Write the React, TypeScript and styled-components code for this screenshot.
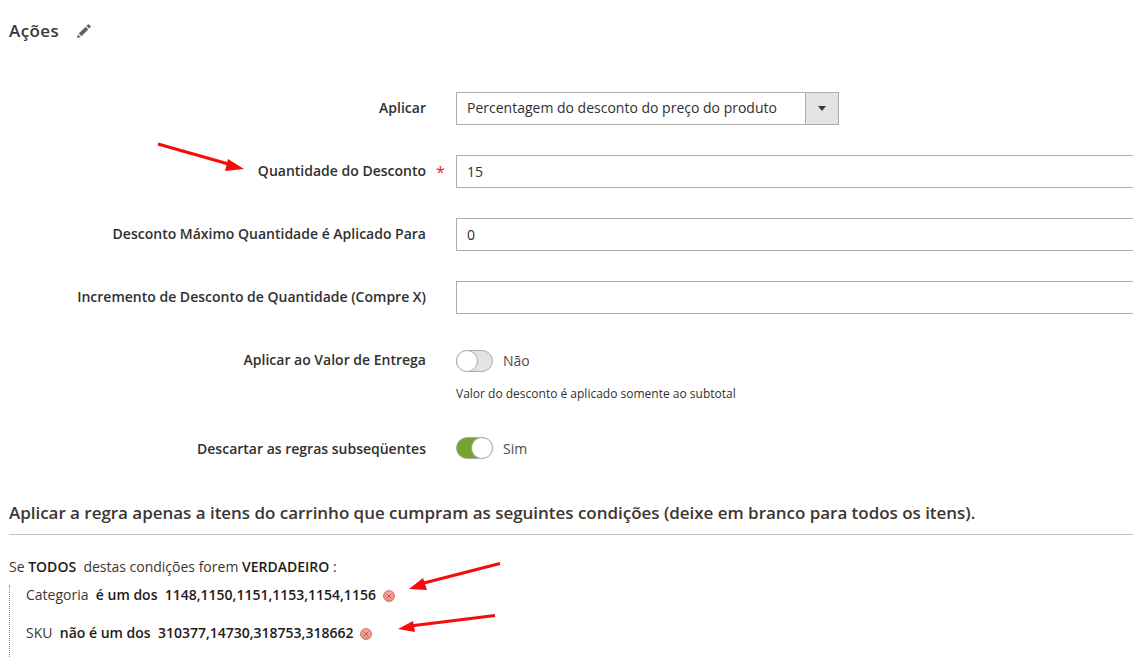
import React from 'react';
import styled, { createGlobalStyle } from 'styled-components';

const GlobalStyle = createGlobalStyle`
  html, body {
    margin: 0;
    padding: 0;
    background: #fff;
    overflow: hidden;
  }
  body {
    font-family: "Open Sans", "Liberation Sans", sans-serif;
    font-size: 14px;
    color: #303030;
  }
`;

const Page = styled.div`
  position: relative;
  width: 1133px;
  height: 658px;
  overflow: hidden;
  padding: 19px 0 0 9px;
  box-sizing: border-box;
`;

const SectionHead = styled.div`
  display: flex;
  align-items: center;
  gap: 18px;
  height: 22px;
  margin-bottom: 51px;
`;

const SectionTitle = styled.span`
  font-size: 17px;
  font-weight: 600;
  color: #41362f;
  letter-spacing: 0.4px;
`;

const PencilIcon = styled.svg`
  margin-top: 1px;
`;

const Form = styled.div`
  margin-left: -9px;
`;

const Row = styled.div<{ $gap: number; $top?: boolean }>`
  display: grid;
  grid-template-columns: 426px 30px 700px;
  align-items: ${(p) => (p.$top ? 'start' : 'center')};
  margin-bottom: ${(p) => p.$gap}px;
`;

const Label = styled.label<{ $flush?: boolean }>`
  font-weight: 600;
  font-size: 14px;
  text-align: right;
  color: #303030;
  padding-bottom: ${(p) => (p.$flush ? 0 : 2)}px;
`;

const Required = styled.span`
  color: #e22626;
  font-size: 16px;
  padding-left: 10px;
  line-height: 1;
`;

const TextInput = styled.div`
  box-sizing: border-box;
  height: 33px;
  border: 1px solid #adadad;
  padding: 0 10px;
  line-height: 31px;
  color: #303030;
  background: #fff;
`;

const SelectBox = styled.div`
  box-sizing: border-box;
  width: 383px;
  height: 33px;
  border: 1px solid #adadad;
  display: flex;
`;

const SelectValue = styled.span`
  flex: 1;
  padding: 0 10px;
  line-height: 29px;
  color: #303030;
`;

const SelectArrow = styled.span`
  width: 32px;
  background: #e3e3e3;
  border-left: 1px solid #adadad;
  display: flex;
  align-items: center;
  justify-content: center;

  &::after {
    content: '';
    border-style: solid;
    border-width: 5px 4px 0;
    border-color: #41362f transparent transparent;
  }
`;

const ToggleLine = styled.div`
  display: flex;
  align-items: center;
  gap: 10px;
  height: 22px;
`;

const Toggle = styled.span<{ $on?: boolean }>`
  box-sizing: border-box;
  position: relative;
  display: block;
  width: 37px;
  height: 22px;
  border-radius: 12px;
  border: 1px solid #adadad;
  background: ${(p) => (p.$on ? '#79a22e' : '#e3e3e3')};

  &::after {
    content: '';
    position: absolute;
    top: -1px;
    ${(p) => (p.$on ? 'right: -1px;' : 'left: -1px;')}
    box-sizing: border-box;
    width: 22px;
    height: 22px;
    border-radius: 50%;
    background: #fff;
    border: 1px solid #adadad;
  }
`;

const ToggleText = styled.span<{ $lift?: boolean }>`
  color: #514943;
  padding-bottom: ${(p) => (p.$lift ? 2 : 0)}px;
`;

const Note = styled.div`
  font-size: 12px;
  color: #303030;
  margin-top: 13px;
  line-height: 17px;
`;

const FieldStack = styled.div``;

const ConditionsTitle = styled.h3`
  margin: 43px 0 0;
  font-size: 17px;
  line-height: 22px;
  font-weight: 600;
  color: #41362f;
  letter-spacing: -0.03px;
  padding-bottom: 10px;
  border-bottom: 1px solid #cac3b4;
`;

const Conditions = styled.div`
  margin-top: 22px;
  line-height: 20px;
  color: #41362f;
`;

const ConditionsLead = styled.div`
  white-space: pre;
`;

const Strong = styled.strong`
  font-weight: 600;
  color: #1f1b18;
`;

const CondList = styled.ul`
  list-style: none;
  margin: 0;
  padding: 0 0 0 16px;
  border-left: 1px dotted #888;
  height: 90px;
`;

const CondItem = styled.li<{ $gap: number }>`
  display: flex;
  align-items: center;
  height: 20px;
  margin-top: ${(p) => p.$gap}px;
  white-space: pre;
`;

const RemoveIcon = styled.svg`
  margin-left: 7px;
  margin-top: 2px;
`;

const ArrowLayer = styled.svg`
  position: absolute;
  inset: 0;
  pointer-events: none;
`;

const Pencil = () => (
  <PencilIcon width="14" height="14" viewBox="0 0 14 14">
    <path d="M0 14l.9-3.6 2.7 2.7zM1.7 9.6L8.6 2.7l2.7 2.7-6.9 6.9zM9.4 1.9L10.9.4a.7.7 0 0 1 1 0l1.7 1.7a.7.7 0 0 1 0 1l-1.5 1.5z" fill="#676056" />
  </PencilIcon>
);

const Remove = () => (
  <RemoveIcon width="12" height="12" viewBox="0 0 12 12">
    <defs>
      <radialGradient id="removeFill" cx="50%" cy="40%" r="65%">
        <stop offset="0%" stopColor="#f4b6ae" />
        <stop offset="100%" stopColor="#e5837a" />
      </radialGradient>
    </defs>
    <circle cx="6" cy="6" r="5.5" fill="url(#removeFill)" stroke="#d0675e" strokeWidth="0.8" />
    <path d="M3.8 3.8l4.4 4.4M8.2 3.8L3.8 8.2" stroke="#c44c42" strokeWidth="1" />
  </RemoveIcon>
);

const Arrow = ({ line, head }: { line: string; head: string }) => (
  <>
    <path d={line} stroke="#f60a0a" strokeWidth="3" fill="none" />
    <polygon points={head} fill="#f60a0a" />
  </>
);

const App: React.FC = () => {
  return (
    <Page>
      <GlobalStyle />
      <SectionHead>
        <SectionTitle>Ações</SectionTitle>
        <Pencil />
      </SectionHead>

      <Form>
        <Row $gap={30}>
          <Label>Aplicar</Label>
          <span />
          <SelectBox>
            <SelectValue>Percentagem do desconto do preço do produto</SelectValue>
            <SelectArrow />
          </SelectBox>
        </Row>
        <Row $gap={30}>
          <Label>Quantidade do Desconto</Label>
          <Required>*</Required>
          <TextInput>15</TextInput>
        </Row>
        <Row $gap={30}>
          <Label>Desconto Máximo Quantidade é Aplicado Para</Label>
          <span />
          <TextInput>0</TextInput>
        </Row>
        <Row $gap={36}>
          <Label>Incremento de Desconto de Quantidade (Compre X)</Label>
          <span />
          <TextInput />
        </Row>
        <Row $gap={35} $top>
          <Label $flush>Aplicar ao Valor de Entrega</Label>
          <span />
          <FieldStack>
            <ToggleLine>
              <Toggle />
              <ToggleText $lift>Não</ToggleText>
            </ToggleLine>
            <Note>Valor do desconto é aplicado somente ao subtotal</Note>
          </FieldStack>
        </Row>
        <Row $gap={0}>
          <Label $flush>Descartar as regras subseqüentes</Label>
          <span />
          <ToggleLine>
            <Toggle $on />
            <ToggleText>Sim</ToggleText>
          </ToggleLine>
        </Row>
      </Form>

      <ConditionsTitle>Aplicar a regra apenas a itens do carrinho que cumpram as seguintes condições (deixe em branco para todos os itens).</ConditionsTitle>
      <Conditions>
        <ConditionsLead>
          Se <Strong>TODOS</Strong>{'  '}destas condições forem <Strong>VERDADEIRO</Strong> :
        </ConditionsLead>
        <CondList>
          <CondItem $gap={8}>
            Categoria{'  '}<Strong>é um dos  1148,1150,1151,1153,1154,1156</Strong>
            <Remove />
          </CondItem>
          <CondItem $gap={18}>
            SKU{'  '}<Strong>não é um dos  310377,14730,318753,318662</Strong>
            <Remove />
          </CondItem>
        </CondList>
      </Conditions>

      <ArrowLayer width="1133" height="658" viewBox="0 0 1133 658">
        <Arrow line="M158 144L232 165" head="228,159 244,169 225,171" />
        <Arrow line="M500 563.5L420 584" head="423,578 409,589 427,590" />
        <Arrow line="M495 615.5L410 626" head="413,621 398,629 415,632" />
      </ArrowLayer>
    </Page>
  );
};

export default App;
